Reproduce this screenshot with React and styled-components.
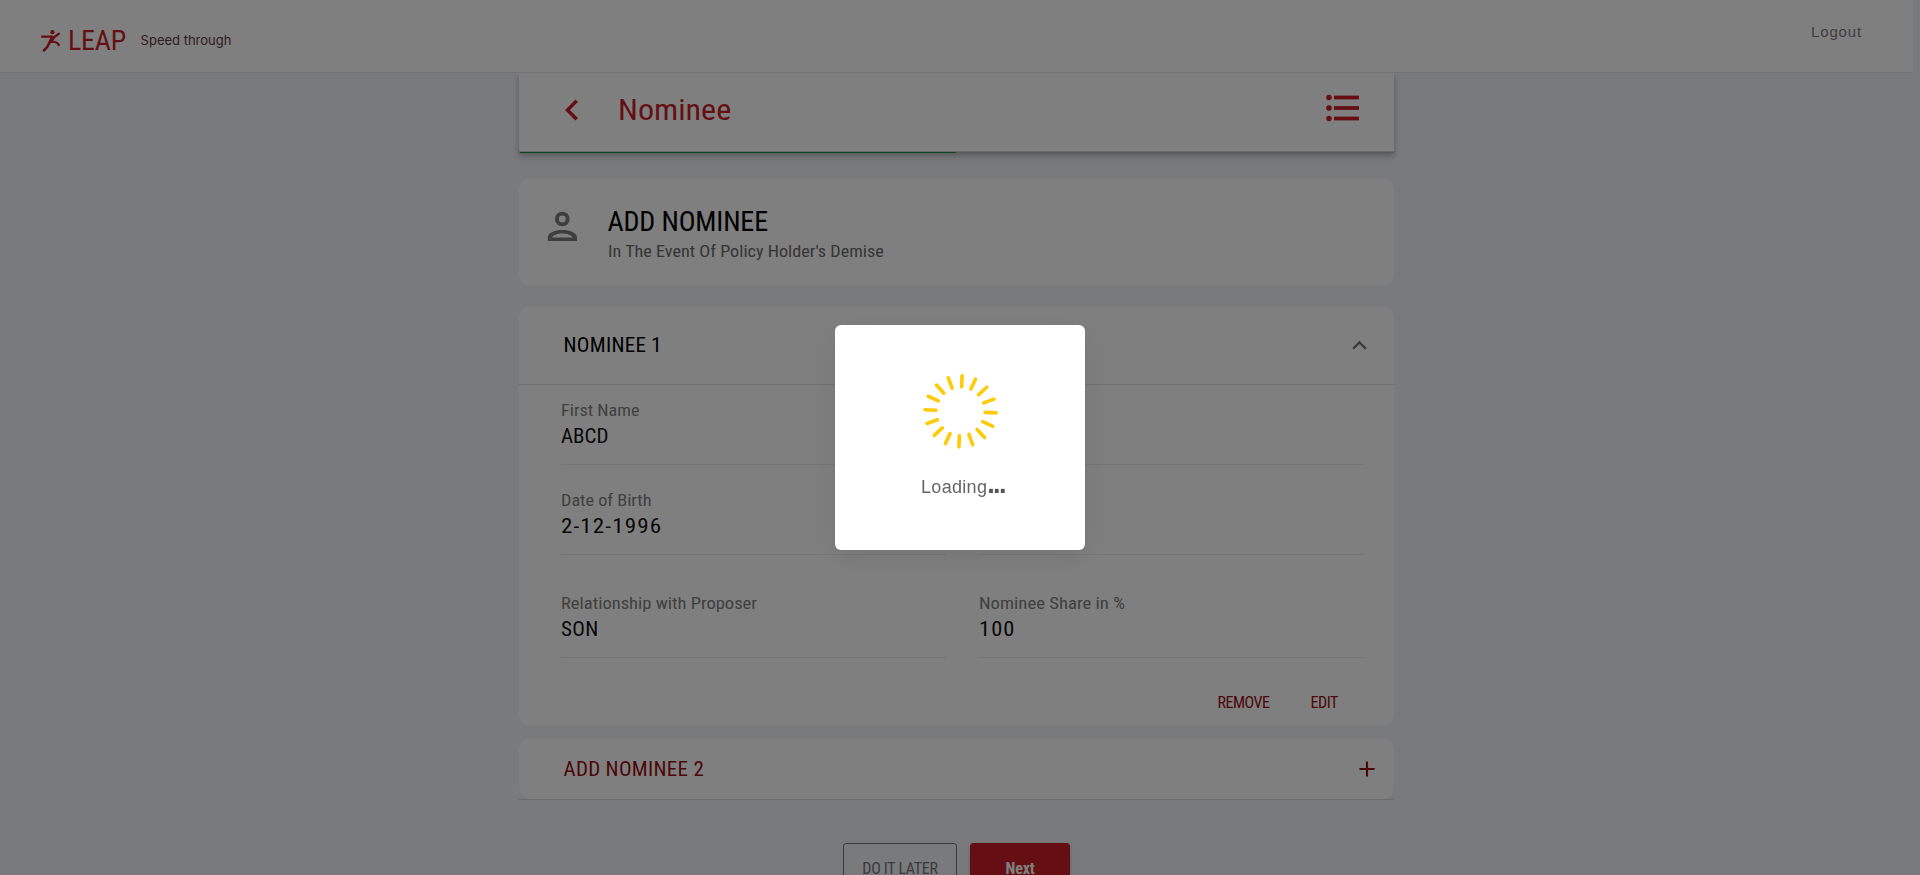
import React from 'react';
import styled, { createGlobalStyle } from 'styled-components';
import { MdChevronLeft, MdExpandLess, MdAdd } from 'react-icons/md';

const red = '#ca1f28';
const darkRed = '#960d12';

const GlobalStyle = createGlobalStyle`
  * { box-sizing: border-box; }
  body {
    margin: 0;
    overflow: hidden;
    background: #f2f4f8;
    font-family: "Roboto Condensed", Roboto, sans-serif;
  }
  svg { display: block; flex: none; }
`;

const Page = styled.div`
  height: 100vh;
  overflow: hidden;
  padding-right: 7px;
`;

const Header = styled.header`
  position: relative;
  z-index: 2;
  display: flex;
  align-items: center;
  height: 73px;
  padding: 9px 51px 0 40px;
  background: #fff;
  border-bottom: 1px solid #e4e4e6;
`;

const Brand = styled.span`
  margin-left: 7px;
  font-size: 28px;
  line-height: 40px;
  letter-spacing: -0.2px;
  color: ${red};
`;

const Tagline = styled.span`
  margin: 0 0 2px 14.5px;
  font: 13px/20px Inter, sans-serif;
  color: #5c3a3c;
`;

const Logout = styled.a`
  align-self: flex-start;
  margin: 13px 0 0 auto;
  font: 15px/20px "Liberation Sans", Arial, sans-serif;
  letter-spacing: 0.85px;
  color: #7c7c7c;
`;

const Column = styled.main`
  width: 875px;
  margin: 0 auto;
`;

const Toolbar = styled.div`
  box-shadow: 0 3px 6px rgba(0, 0, 0, 0.27);
`;

const ToolbarRow = styled.div`
  display: flex;
  align-items: center;
  height: 79px;
  padding: 0 35px 5px 32px;
  background: #fff;
  border-bottom: 1px solid #d2d2d2;
  color: ${red};
`;

const PageTitle = styled.h1`
  flex: 1;
  margin: 0 0 0 25px;
  font-size: 30px;
  font-weight: 400;
  line-height: 36px;
  transform: scaleX(1.07);
  transform-origin: left;
`;

const MenuButton = styled.span`
  padding-bottom: 4px;
`;

const Progress = styled.div`
  height: 1px;
  background: #b4b4b4;

  &::before {
    content: '';
    display: block;
    width: 436px;
    height: 1px;
    margin-left: 1px;
    background: #1c8448;
  }
`;

const Card = styled.section`
  margin-top: ${(p) => p.$gap}px;
  height: ${(p) => p.$height}px;
  background: #fff;
  border-radius: 12px;
`;

const IntroCard = styled(Card)`
  display: flex;
  align-items: flex-start;
  padding: 26px 21px;
  color: #7c7c7c;
`;

const IntroText = styled.div`
  margin-left: 23.5px;
`;

const IntroTitle = styled.h2`
  margin: 2px 0 1px;
  font-size: 28px;
  font-weight: 400;
  line-height: 32px;
  letter-spacing: -0.15px;
  color: #000;
`;

const IntroNote = styled.p`
  margin: 0;
  font-size: 17px;
  line-height: 24px;
  color: #6a6a6a;
  transform: scaleX(1.068);
  transform-origin: left;
`;

const PanelHead = styled.div`
  display: flex;
  align-items: center;
  justify-content: space-between;
  height: 79px;
  padding: 0 20.5px 0 44.5px;
  border-bottom: 1px solid #e0e0e0;
  color: #757575;
`;

const PanelTitle = styled.h3`
  margin: 0;
  font-size: 21px;
  font-weight: 400;
  line-height: 28px;
  letter-spacing: 0.3px;
  color: ${(p) => (p.$accent ? darkRed : '#000')};
`;

const Fields = styled.div`
  display: grid;
  grid-template-columns: 385px 385px;
  grid-template-rows: 80px 93px 80px;
  column-gap: 33px;
  row-gap: 10px;
  padding-left: 42px;
`;

const FieldBox = styled.div`
  height: 80px;
  padding-top: 12.5px;
  border-bottom: 1px solid #ececec;
`;

const Label = styled.div`
  font-size: 17px;
  line-height: 24px;
  color: #808080;
  transform: scaleX(${(p) => p.$stretch});
  transform-origin: left;
`;

const Value = styled.div`
  font-size: 21px;
  line-height: 28px;
  letter-spacing: ${(p) => p.$spacing}px;
  color: #111;
  transform: scaleX(${(p) => p.$stretch});
  transform-origin: left;
`;

const Actions = styled.div`
  display: flex;
  justify-content: flex-end;
  gap: 41px;
  padding: 34px 56px 0 0;
`;

const TextButton = styled.button`
  padding: 0;
  border: 0;
  background: none;
  font: 16px/21px "Roboto Condensed", Roboto, sans-serif;
  letter-spacing: -0.45px;
  color: ${darkRed};
`;

const AddRow = styled(Card)`
  display: flex;
  align-items: center;
  justify-content: space-between;
  margin: 0;
  padding: 0 14.5px 0 44.5px;
  color: ${darkRed};
`;

const AddWrap = styled.div`
  margin-top: 12px;
  border-bottom: 1px solid #d6d7da;
`;

const Buttons = styled.div`
  display: flex;
  justify-content: center;
  gap: 13px;
  margin-top: 43px;
`;

const Button = styled.button`
  width: ${(p) => (p.$primary ? 100 : 114)}px;
  height: 50px;
  padding: 0;
  border: 1px solid ${(p) => (p.$primary ? red : '#777')};
  border-radius: 3px;
  background: ${(p) => (p.$primary ? red : 'transparent')};
  box-shadow: ${(p) => (p.$primary ? '0 2px 4px rgba(0,0,0,.2)' : 'none')};
  color: ${(p) => (p.$primary ? '#fff' : '#777')};
  font: ${(p) => (p.$primary ? 700 : 400)} 16px/21px "Roboto Condensed", Roboto, sans-serif;
  letter-spacing: ${(p) => (p.$primary ? -0.2 : -0.3)}px;
`;

const Overlay = styled.div`
  position: fixed;
  inset: 0;
  z-index: 10;
  display: flex;
  align-items: center;
  justify-content: center;
  background: rgba(0, 0, 0, 0.5);
`;

const Dialog = styled.div`
  display: flex;
  flex-direction: column;
  align-items: center;
  width: 250px;
  height: 225px;
  padding-top: 48px;
  background: #fff;
  border-radius: 6px;
  box-shadow: 0 8px 30px rgba(0, 0, 0, 0.09);
`;

const LoadingText = styled.div`
  display: flex;
  align-items: baseline;
  margin: 26px 0 0 6px;
  height: 24px;
  font: 18px/24px "Liberation Sans", Arial, sans-serif;
  letter-spacing: 0.3px;
  color: #666;
`;

const Dots = styled.span`
  font-size: 27px;
  font-weight: 700;
  line-height: 0;
  letter-spacing: -1.6px;
  color: #555;
`;

const Runner = () => (
  <svg width="21" height="24" viewBox="0 0 21 24" fill="none" stroke={red} strokeLinecap="round" strokeLinejoin="round">
    <circle cx="12.4" cy="3.2" r="2.1" fill={red} stroke="none" />
    <path d="M2 7.6H11L14.5 8L19 4.6" strokeWidth="2.2" />
    <path d="M12 8.2L9 14.6Q7.4 18.8 4 21.4" strokeWidth="2.6" />
    <path d="M14 8.4L11.4 13H14.8Q17.6 13.4 18.9 16.2" strokeWidth="2.2" />
  </svg>
);

const PersonIcon = () => (
  <svg width="44" height="44" viewBox="0 0 44 44" fill="none" stroke="currentColor">
    <circle cx="22.3" cy="15" r="5.4" strokeWidth="3.9" />
    <path
      d="M7.8 37V33.5C7.8 28.5 15 26 22.3 26S37 28.5 37 33.5V37ZM12 33.6H32.6C31 31 27 29.6 22.3 29.6S13.6 31 12 33.6Z"
      fill="currentColor"
      fillRule="evenodd"
      stroke="none"
    />
  </svg>
);

const ListIcon = () => (
  <svg width="33" height="28" viewBox="0 0 33 28" fill={red}>
    {[3.5, 14, 24.5].map((y) => (
      <g key={y}>
        <circle cx="3" cy={y} r="2.8" />
        <rect x="8" y={y - 1.9} width="25" height="3.8" />
      </g>
    ))}
  </svg>
);

const Spinner = () => (
  <svg width="76" height="76" viewBox="-38.5 -38.3 76 76" stroke="#ffcb08" strokeWidth="3.6" strokeLinecap="round">
    {Array.from({ length: 16 }, (_, i) => (
      <line key={i} y1="-24.6" y2="-35.6" transform={`rotate(${i * 22.5 + 2.5})`} />
    ))}
  </svg>
);

const Field = ({ label, value, stretch = 1.07, spacing = 0, valueStretch = 1 }) => (
  <FieldBox>
    <Label $stretch={stretch}>{label}</Label>
    <Value $spacing={spacing} $stretch={valueStretch}>{value}</Value>
  </FieldBox>
);

export default function App() {
  return (
    <>
      <GlobalStyle />
      <Page>
        <Header>
          <Runner />
          <Brand>LEAP</Brand>
          <Tagline>Speed through</Tagline>
          <Logout>Logout</Logout>
        </Header>
        <Column>
          <Toolbar>
            <ToolbarRow>
              <MdChevronLeft size={42} />
              <PageTitle>Nominee</PageTitle>
              <MenuButton><ListIcon /></MenuButton>
            </ToolbarRow>
            <Progress />
          </Toolbar>

          <IntroCard $gap={25} $height={108}>
            <PersonIcon />
            <IntroText>
              <IntroTitle>ADD NOMINEE</IntroTitle>
              <IntroNote>In The Event Of Policy Holder's Demise</IntroNote>
            </IntroText>
          </IntroCard>

          <Card $gap={20} $height={420}>
            <PanelHead>
              <PanelTitle>NOMINEE 1</PanelTitle>
              <MdExpandLess size={29} />
            </PanelHead>
            <Fields>
              <Field label="First Name" value="ABCD" />
              <FieldBox />
              <Field label="Date of Birth" value="2-12-1996" spacing={1} valueStretch={1.1} />
              <FieldBox />
              <Field label="Relationship with Proposer" value="SON" stretch={1.09} spacing={0.35} />
              <Field label="Nominee Share in %" value="100" stretch={1.1} spacing={1} valueStretch={1.07} />
            </Fields>
            <Actions>
              <TextButton>REMOVE</TextButton>
              <TextButton>EDIT</TextButton>
            </Actions>
          </Card>

          <AddWrap>
            <AddRow $height={61}>
              <PanelTitle $accent>ADD NOMINEE 2</PanelTitle>
              <MdAdd size={26} />
            </AddRow>
          </AddWrap>

          <Buttons>
            <Button>DO IT LATER</Button>
            <Button $primary>Next</Button>
          </Buttons>
        </Column>
      </Page>
      <Overlay>
        <Dialog>
          <Spinner />
          <LoadingText>Loading<Dots>...</Dots></LoadingText>
        </Dialog>
      </Overlay>
    </>
  );
}
